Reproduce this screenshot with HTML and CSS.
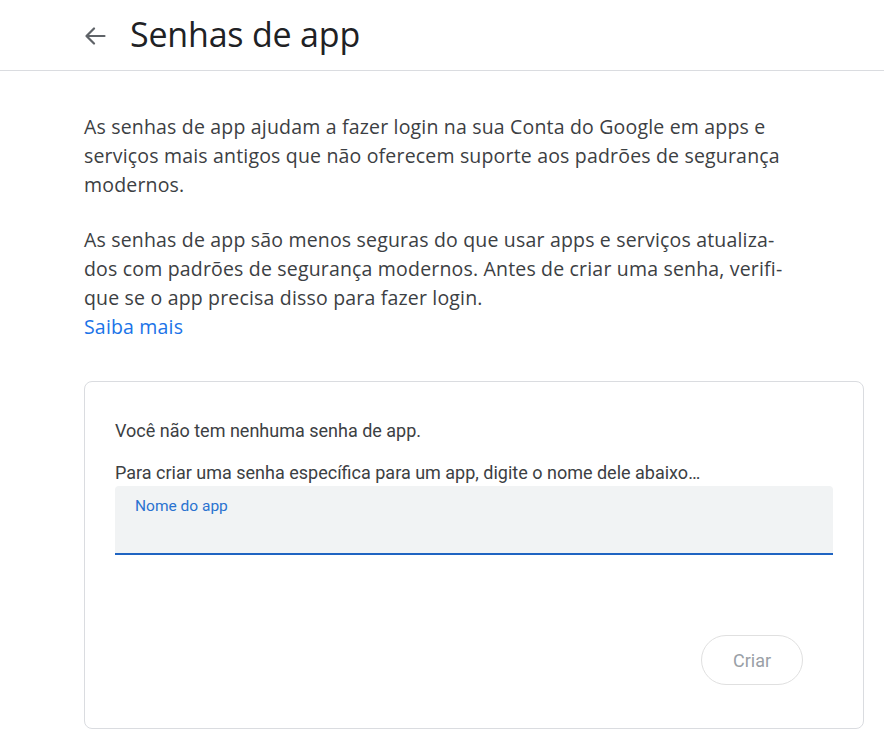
FILE: index.html
```html
<!DOCTYPE html>
<html lang="pt-BR">
<head>
<meta charset="utf-8">
<title>Senhas de app</title>
<link rel="stylesheet" href="styles.css">
</head>
<body>
<header class="topbar">
  <button class="back" aria-label="Voltar">
    <svg width="22" height="18" viewBox="0 0 22 18"><path d="M20.5 9H2.5M10 1.5L2.5 9l7.5 7.5" fill="none" stroke="#5f6368" stroke-width="2.2" stroke-linecap="round" stroke-linejoin="round"/></svg>
  </button>
  <h1 class="title">Senhas de app</h1>
</header>
<main class="content">
  <p class="intro">As senhas de app ajudam a fazer login na sua Conta do Google em apps e<br>serviços mais antigos que não oferecem suporte aos padrões de segurança<br>modernos.</p>
  <p class="intro second">As senhas de app são menos seguras do que usar apps e serviços atualiza-<br>dos com padrões de segurança modernos. Antes de criar uma senha, verifi-<br>que se o app precisa disso para fazer login.<br><a class="link" href="#">Saiba mais</a></p>
  <section class="card">
    <p class="card-text">Você não tem nenhuma senha de app.</p>
    <p class="card-text hint">Para criar uma senha específica para um app, digite o nome dele abaixo…</p>
    <div class="field">
      <span class="label">Nome do app</span>
    </div>
    <div class="actions">
      <button class="create">Criar</button>
    </div>
  </section>
</main>
</body>
</html>
```
FILE: styles.css
```css
* { box-sizing: border-box; }
html, body { margin: 0; padding: 0; background: #fff; }
body { font-family: Roboto, "Noto Sans", Arial, sans-serif; color: #3c4043; }

.topbar {
  display: flex;
  align-items: center;
  height: 71px;
  border-bottom: 1px solid #dadce0;
  padding-left: 84px;
}
.back {
  border: 0;
  background: none;
  padding: 0;
  width: 22px;
  height: 18px;
  display: flex;
  margin-right: 24px;
  margin-top: 2px;
  cursor: pointer;
}
.title {
  margin: 0;
  font-family: "Open Sans", Roboto, sans-serif;
  font-weight: 400;
  font-size: 34px;
  color: #202124;
  letter-spacing: -0.2px;
  padding-bottom: 2px;
}

.content {
  padding: 41px 21px 0 84px;
}
.intro {
  margin: 0;
  font-family: "Open Sans", Roboto, sans-serif;
  font-size: 19.5px;
  letter-spacing: 0.18px;
  line-height: 29px;
  color: #3c4043;
  white-space: nowrap;
}
.intro.second { margin-top: 26px; }
.link { color: #1a73e8; text-decoration: none; }

.card {
  margin-top: 40px;
  border: 1px solid #dadce0;
  border-radius: 8px;
  padding: 35px 30px 43px 30px;
  width: 780px;
}
.card-text {
  margin: 0;
  font-size: 18px;
  line-height: 27px;
  color: #3c4043;
}
.hint { margin-top: 15px; }
.field {
  height: 69px;
  background: #f1f3f4;
  border-radius: 4px 4px 0 0;
  border-bottom: 2px solid #1f64c2;
  padding: 10px 20px;
}
.label {
  font-size: 15.5px;
  line-height: 18px;
  color: #2a72d0;
}
.actions {
  display: flex;
  justify-content: flex-end;
  margin-top: 80px;
  padding-right: 30px;
}
.create {
  width: 102px;
  height: 50px;
  border-radius: 25px;
  border: 1px solid #e0e0e0;
  background: #fff;
  color: #9aa0a6;
  font-family: Roboto, sans-serif;
  font-size: 18px;
}
```
